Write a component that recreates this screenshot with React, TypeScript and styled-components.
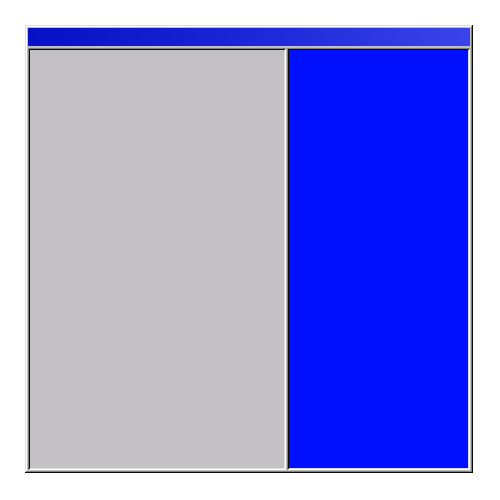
import { FC } from "react";
import styled, { createGlobalStyle } from "styled-components";

const GlobalStyle = createGlobalStyle`
  html, body {
    margin: 0;
    padding: 0;
    background: #ffffff;
    font-family: "Liberation Sans", Arial, sans-serif;
  }
`;

const Page = styled.div`
  width: 500px;
  height: 500px;
  padding: 25px;
  box-sizing: border-box;
  background: #ffffff;
`;

const Window = styled.div`
  width: 448px;
  height: 448px;
  box-sizing: border-box;
  padding: 3px;
  background: #c0c0c0;
  display: flex;
  flex-direction: column;
  gap: 2px;
  box-shadow:
    inset -1px -1px #0a0a0a,
    inset 1px 1px #dfdfdf,
    inset -2px -2px #808080,
    inset 2px 2px #ffffff;
`;

const TitleBar = styled.div`
  height: 18px;
  flex-shrink: 0;
  background: linear-gradient(90deg, #0610c4 0%, #1a26d8 50%, #3a44ea 100%);
`;

const Panels = styled.div`
  flex: 1;
  display: flex;
  gap: 1px;
`;

const Panel = styled.div<{ $width: number; $color: string }>`
  width: ${(p) => p.$width}px;
  flex-shrink: 0;
  box-sizing: border-box;
  background: ${(p) => p.$color};
  box-shadow:
    inset 1px 1px #808080,
    inset -1px -1px #ffffff,
    inset 2px 2px #0a0a0a,
    inset -2px -2px #dfdfdf;
`;

const App: FC = () => {
  return (
    <>
      <GlobalStyle />
      <Page>
        <Window>
          <TitleBar />
          <Panels>
            <Panel $width={258} $color="#c3c1c3" />
            <Panel $width={183} $color="#0010ff" />
          </Panels>
        </Window>
      </Page>
    </>
  );
};

export default App;
